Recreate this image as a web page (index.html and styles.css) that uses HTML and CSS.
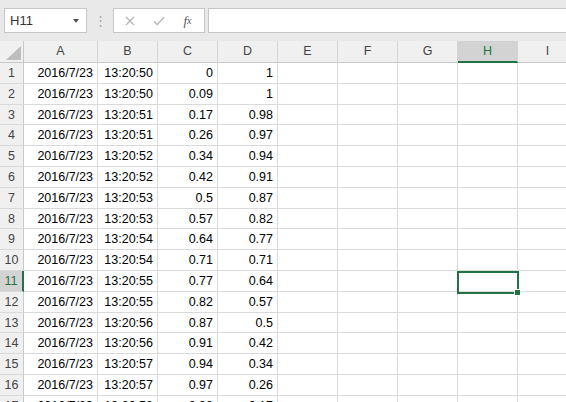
FILE: index.html
```html
<!DOCTYPE html>
<html>
<head>
<meta charset="utf-8" />
<title>Book1</title>
<link rel="stylesheet" href="styles.css">
</head>
<body>
	<!-- 名前ボックス / 数式バー -->
	<div class="bar">
		<div class="name_box"><span>H11</span><i class="name_arrow"></i></div>
		<div class="bar_dots">&#8942;</div>
		<div class="fx_btns">
			<span class="fx_btn">
				<svg width="10" height="10" viewBox="0 0 10 10"><path d="M1 1L9 9M9 1L1 9" stroke="#b5b5b5" stroke-width="1.3" fill="none"/></svg>
			</span>
			<span class="fx_btn">
				<svg width="12" height="10" viewBox="0 0 12 10"><path d="M1 5.5L4.2 8.6L11 1.2" stroke="#b5b5b5" stroke-width="1.4" fill="none"/></svg>
			</span>
			<span class="fx_btn fx_label"><i>f</i><sub>x</sub></span>
		</div>
		<div class="fx_input"></div>
	</div>

	<div class="sheet">
		<div class="row head">
			<div class="rh corner">
				<svg width="23" height="21" viewBox="0 0 23 21"><polygon points="6,19 21,19 21,5" fill="#bdbdbd"/></svg>
			</div>
			<div class="ch ca">A</div><div class="ch">B</div><div class="ch">C</div><div class="ch">D</div>
			<div class="ch">E</div><div class="ch">F</div><div class="ch">G</div><div class="ch ch_sel">H</div><div class="ch">I</div>
		</div>
		<div class="row"><div class="rh">1</div><div class="c ca">2016/7/23</div><div class="c">13:20:50</div><div class="c">0</div><div class="c">1</div><div class="c"></div><div class="c"></div><div class="c"></div><div class="c"></div><div class="c"></div></div>
		<div class="row"><div class="rh">2</div><div class="c ca">2016/7/23</div><div class="c">13:20:50</div><div class="c">0.09</div><div class="c">1</div><div class="c"></div><div class="c"></div><div class="c"></div><div class="c"></div><div class="c"></div></div>
		<div class="row"><div class="rh">3</div><div class="c ca">2016/7/23</div><div class="c">13:20:51</div><div class="c">0.17</div><div class="c">0.98</div><div class="c"></div><div class="c"></div><div class="c"></div><div class="c"></div><div class="c"></div></div>
		<div class="row"><div class="rh">4</div><div class="c ca">2016/7/23</div><div class="c">13:20:51</div><div class="c">0.26</div><div class="c">0.97</div><div class="c"></div><div class="c"></div><div class="c"></div><div class="c"></div><div class="c"></div></div>
		<div class="row"><div class="rh">5</div><div class="c ca">2016/7/23</div><div class="c">13:20:52</div><div class="c">0.34</div><div class="c">0.94</div><div class="c"></div><div class="c"></div><div class="c"></div><div class="c"></div><div class="c"></div></div>
		<div class="row"><div class="rh">6</div><div class="c ca">2016/7/23</div><div class="c">13:20:52</div><div class="c">0.42</div><div class="c">0.91</div><div class="c"></div><div class="c"></div><div class="c"></div><div class="c"></div><div class="c"></div></div>
		<div class="row"><div class="rh">7</div><div class="c ca">2016/7/23</div><div class="c">13:20:53</div><div class="c">0.5</div><div class="c">0.87</div><div class="c"></div><div class="c"></div><div class="c"></div><div class="c"></div><div class="c"></div></div>
		<div class="row"><div class="rh">8</div><div class="c ca">2016/7/23</div><div class="c">13:20:53</div><div class="c">0.57</div><div class="c">0.82</div><div class="c"></div><div class="c"></div><div class="c"></div><div class="c"></div><div class="c"></div></div>
		<div class="row"><div class="rh">9</div><div class="c ca">2016/7/23</div><div class="c">13:20:54</div><div class="c">0.64</div><div class="c">0.77</div><div class="c"></div><div class="c"></div><div class="c"></div><div class="c"></div><div class="c"></div></div>
		<div class="row"><div class="rh">10</div><div class="c ca">2016/7/23</div><div class="c">13:20:54</div><div class="c">0.71</div><div class="c">0.71</div><div class="c"></div><div class="c"></div><div class="c"></div><div class="c"></div><div class="c"></div></div>
		<div class="row"><div class="rh rh_sel">11</div><div class="c ca">2016/7/23</div><div class="c">13:20:55</div><div class="c">0.77</div><div class="c">0.64</div><div class="c"></div><div class="c"></div><div class="c"></div><div class="c"></div><div class="c"></div></div>
		<div class="row"><div class="rh">12</div><div class="c ca">2016/7/23</div><div class="c">13:20:55</div><div class="c">0.82</div><div class="c">0.57</div><div class="c"></div><div class="c"></div><div class="c"></div><div class="c"></div><div class="c"></div></div>
		<div class="row"><div class="rh">13</div><div class="c ca">2016/7/23</div><div class="c">13:20:56</div><div class="c">0.87</div><div class="c">0.5</div><div class="c"></div><div class="c"></div><div class="c"></div><div class="c"></div><div class="c"></div></div>
		<div class="row"><div class="rh">14</div><div class="c ca">2016/7/23</div><div class="c">13:20:56</div><div class="c">0.91</div><div class="c">0.42</div><div class="c"></div><div class="c"></div><div class="c"></div><div class="c"></div><div class="c"></div></div>
		<div class="row"><div class="rh">15</div><div class="c ca">2016/7/23</div><div class="c">13:20:57</div><div class="c">0.94</div><div class="c">0.34</div><div class="c"></div><div class="c"></div><div class="c"></div><div class="c"></div><div class="c"></div></div>
		<div class="row"><div class="rh">16</div><div class="c ca">2016/7/23</div><div class="c">13:20:57</div><div class="c">0.97</div><div class="c">0.26</div><div class="c"></div><div class="c"></div><div class="c"></div><div class="c"></div><div class="c"></div></div>
		<div class="row"><div class="rh">17</div><div class="c ca">2016/7/23</div><div class="c">13:20:58</div><div class="c">0.98</div><div class="c">0.17</div><div class="c"></div><div class="c"></div><div class="c"></div><div class="c"></div><div class="c"></div></div>

		<!-- 選択セル H11 -->
		<div class="cell_sel"><i class="fill_handle"></i></div>
	</div>
</body>
</html>
```
FILE: styles.css
```css
html, body, div {
	padding: 0;
	margin: 0;
}

body {
	width: 566px;
	height: 402px;
	overflow: hidden;
	background: #fff;
	color: #000;
	font-family: "Liberation Sans", "Noto Sans CJK JP", sans-serif;
	font-size: 12.5px;
}

/* 数式バー */
.bar {
	height: 41px;
	background: #e9e9e9;
	display: flex;
	align-items: center;
	padding-left: 4px;
	box-sizing: border-box;
}

.name_box {
	width: 83px;
	height: 25px;
	box-sizing: border-box;
	border: 1px solid #c6c6c6;
	background: #fff;
	display: flex;
	align-items: center;
	justify-content: space-between;
	padding: 0 7px 0 5px;
	color: #333;
	font-size: 13px;
}

.name_arrow {
	width: 0;
	height: 0;
	border-left: 3.5px solid transparent;
	border-right: 3.5px solid transparent;
	border-top: 4px solid #555;
}

.bar_dots {
	width: 26px;
	text-align: center;
	color: #a8a8a8;
	font-size: 13px;
}

.fx_btns {
	width: 92px;
	height: 25px;
	box-sizing: border-box;
	border: 1px solid #c6c6c6;
	background: #fff;
	display: flex;
	align-items: center;
	padding-left: 1px;
}

.fx_btn {
	width: 29px;
	display: flex;
	justify-content: center;
	align-items: center;
}

.fx_label {
	font-family: "Liberation Serif", serif;
	font-size: 13px;
	color: #555;
}

.fx_label sub {
	font-style: italic;
	font-size: 10px;
	vertical-align: -1px;
}

.fx_input {
	flex: 1;
	height: 25px;
	margin-left: 3px;
	box-sizing: border-box;
	border: 1px solid #c6c6c6;
	border-right: none;
	background: #fff;
}

/* シート */
.sheet {
	position: relative;
}

.row {
	display: flex;
	height: 20.8px;
}

.row.head {
	height: 22px;
}

.rh, .ch, .c {
	flex: none;
	box-sizing: border-box;
	width: 60px;
	height: 100%;
	white-space: nowrap;
	overflow: hidden;
}

.rh {
	width: 24px;
	background: #f0f0f0;
	border-right: 1px solid #c8c8c8;
	border-bottom: 1px solid #d9d9d9;
	color: #444;
	text-align: center;
	line-height: 20px;
}

.corner {
	border-bottom: 1px solid #c8c8c8;
}

.corner svg {
	display: block;
}

.ch {
	background: #f0f0f0;
	border-right: 1px solid #d4d4d4;
	border-bottom: 1px solid #c8c8c8;
	color: #444;
	text-align: center;
	line-height: 21px;
}

.ca {
	width: 74px;
}

.ch_sel {
	background: #d3d3d3;
	border-bottom: 2px solid #217346;
	color: #217346;
}

.rh_sel {
	background: #d3d3d3;
	border-right: 2px solid #217346;
	color: #217346;
}

.c {
	border-right: 1px solid #dadada;
	border-bottom: 1px solid #dadada;
	text-align: right;
	padding-right: 4px;
	line-height: 20px;
}

.cell_sel {
	position: absolute;
	left: 457px;
	top: 230px;
	width: 62px;
	height: 23px;
	box-sizing: border-box;
	border: 2px solid #217346;
}

.fill_handle {
	position: absolute;
	right: -4px;
	bottom: -4px;
	width: 5px;
	height: 5px;
	background: #217346;
	border: 1px solid #fff;
}
```
